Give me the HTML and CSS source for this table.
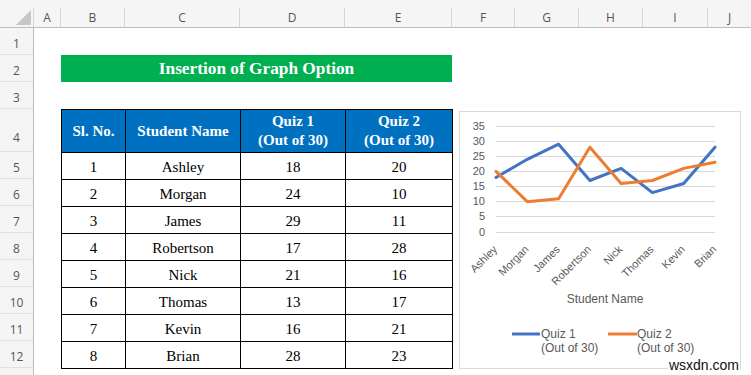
FILE: index.html
```html
<!DOCTYPE html>
<html>
<head>
<meta charset="utf-8">
<link rel="stylesheet" href="styles.css">
</head>
<body>
<div class="colbar">
  <div class="strip"></div>
  <div class="heads">
    <div class="corner"><svg width="34" height="19" viewBox="0 0 34 19"><polygon points="31,2 31,17 16,17" fill="#c7c7c7"/></svg></div>
    <div class="ch w27">A</div>
    <div class="ch w64">B</div>
    <div class="ch w115">C</div>
    <div class="ch w105">D</div>
    <div class="ch w107">E</div>
    <div class="ch w63">F</div>
    <div class="ch w64">G</div>
    <div class="ch w64">H</div>
    <div class="ch w65">I</div>
    <div class="ch w43 last">J</div>
  </div>
</div>
<div class="main">
  <div class="rowheads">
    <div class="rh">1</div>
    <div class="rh">2</div>
    <div class="rh">3</div>
    <div class="rh tall">4</div>
    <div class="rh">5</div>
    <div class="rh">6</div>
    <div class="rh">7</div>
    <div class="rh">8</div>
    <div class="rh">9</div>
    <div class="rh">10</div>
    <div class="rh">11</div>
    <div class="rh">12</div>
    <div class="rh stub"></div>
  </div>
  <div class="canvas">
    <div class="title">Insertion of Graph Option</div>
    <table class="data">
      <colgroup><col class="c1"><col class="c2"><col class="c3"><col class="c4"></colgroup>
      <thead>
        <tr><th>Sl. No.</th><th>Student Name</th><th>Quiz 1<br>(Out of 30)</th><th>Quiz 2<br>(Out of 30)</th></tr>
      </thead>
      <tbody>
        <tr><td>1</td><td>Ashley</td><td>18</td><td>20</td></tr>
        <tr><td>2</td><td>Morgan</td><td>24</td><td>10</td></tr>
        <tr><td>3</td><td>James</td><td>29</td><td>11</td></tr>
        <tr><td>4</td><td>Robertson</td><td>17</td><td>28</td></tr>
        <tr><td>5</td><td>Nick</td><td>21</td><td>16</td></tr>
        <tr><td>6</td><td>Thomas</td><td>13</td><td>17</td></tr>
        <tr><td>7</td><td>Kevin</td><td>16</td><td>21</td></tr>
        <tr><td>8</td><td>Brian</td><td>28</td><td>23</td></tr>
      </tbody>
    </table>
    <div class="chart">
      <svg class="plot" width="280" height="256" viewBox="1 1 280 256">
        <g stroke="#d9d9d9" stroke-width="1">
          <line x1="37" x2="256" y1="15.5" y2="15.5"/>
          <line x1="37" x2="256" y1="30.5" y2="30.5"/>
          <line x1="37" x2="256" y1="45.5" y2="45.5"/>
          <line x1="37" x2="256" y1="60.5" y2="60.5"/>
          <line x1="37" x2="256" y1="75.5" y2="75.5"/>
          <line x1="37" x2="256" y1="90.5" y2="90.5"/>
          <line x1="37" x2="256" y1="105.5" y2="105.5"/>
          <line x1="37" x2="256" y1="121.5" y2="121.5"/>
        </g>
        <g class="ylab" text-anchor="end">
          <text x="26" y="19">35</text>
          <text x="26" y="34">30</text>
          <text x="26" y="49">25</text>
          <text x="26" y="64">20</text>
          <text x="26" y="79">15</text>
          <text x="26" y="94">10</text>
          <text x="26" y="109">5</text>
          <text x="26" y="125">0</text>
        </g>
        <polyline fill="none" stroke="#4472c4" stroke-width="3" stroke-linejoin="round" stroke-linecap="round"
          points="37,66.5 68.3,48.3 99.6,33.2 130.9,69.5 162.1,57.4 193.4,81.6 224.7,72.5 256,36.2"/>
        <polyline fill="none" stroke="#ed7d31" stroke-width="3" stroke-linejoin="round" stroke-linecap="round"
          points="37,60.4 68.3,90.7 99.6,87.7 130.9,36.2 162.1,72.5 193.4,69.5 224.7,57.4 256,51.3"/>
        <g class="xlab" text-anchor="end">
          <text x="39" y="139" transform="rotate(-45 39 139)">Ashley</text>
          <text x="70.3" y="139" transform="rotate(-45 70.3 139)">Morgan</text>
          <text x="101.6" y="139" transform="rotate(-45 101.6 139)">James</text>
          <text x="132.9" y="139" transform="rotate(-45 132.9 139)">Robertson</text>
          <text x="164.1" y="139" transform="rotate(-45 164.1 139)">Nick</text>
          <text x="195.4" y="139" transform="rotate(-45 195.4 139)">Thomas</text>
          <text x="226.7" y="139" transform="rotate(-45 226.7 139)">Kevin</text>
          <text x="258" y="139" transform="rotate(-45 258 139)">Brian</text>
        </g>
        <text class="axtitle" x="146" y="192" text-anchor="middle">Student Name</text>
        <line x1="53" x2="81" y1="223" y2="223" stroke="#4472c4" stroke-width="3"/>
        <text class="leg" x="82" y="227">Quiz 1</text>
        <text class="leg" x="82" y="241">(Out of 30)</text>
        <line x1="149" x2="178" y1="223" y2="223" stroke="#ed7d31" stroke-width="3"/>
        <text class="leg" x="178" y="227">Quiz 2</text>
        <text class="leg" x="178" y="241">(Out of 30)</text>
      </svg>
    </div>
  </div>
</div>
<div class="mark">wsxdn.com</div>
</body>
</html>
```
FILE: styles.css
```css
html, body {
  margin: 0;
  padding: 0;
  background: #ffffff;
}
body {
  width: 751px;
  height: 375px;
  overflow: hidden;
  position: relative;
  font-family: "Open Sans", "Liberation Sans", sans-serif;
}
.colbar {
  background: #f5f5f5;
}
.strip {
  height: 8px;
}
.heads {
  display: flex;
  height: 19px;
  border-bottom: 1px solid #bdbdbd;
}
.corner {
  width: 34px;
  flex: none;
  border-right: 1px solid #d6d6d6;
  box-sizing: border-box;
}
.corner svg {
  display: block;
}
.ch {
  flex: none;
  box-sizing: border-box;
  border-right: 1px solid #d6d6d6;
  text-align: center;
  font-size: 12px;
  line-height: 19px;
  color: #555555;
}
.ch.last {
  border-right: none;
}
.w27 { width: 27px; }
.w43 { width: 43px; }
.w63 { width: 63px; }
.w64 { width: 64px; }
.w65 { width: 65px; }
.w105 { width: 105px; }
.w107 { width: 107px; }
.w115 { width: 115px; }
.main {
  display: flex;
}
.rowheads {
  width: 34px;
  flex: none;
  background: #f5f5f5;
  border-right: 1px solid #bdbdbd;
  box-sizing: border-box;
}
.rh {
  height: 27px;
  box-sizing: border-box;
  border-bottom: 1px solid #e1e1e1;
  display: flex;
  align-items: center;
  justify-content: center;
  padding-top: 4px;
  font-size: 12px;
  color: #555555;
}
.rh.tall {
  height: 43px;
  padding-top: 14px;
}
.rh.stub {
  height: 7px;
  border-bottom: none;
  padding: 0;
}
.canvas {
  display: grid;
  grid-template-columns: 27px 64px 115px 105px 107px 63px 64px 64px 65px 43px;
  grid-template-rows: 27px 27px 27px 43px repeat(8, 27px) 7px;
}
.title {
  grid-column: 2 / 6;
  grid-row: 2;
  background: #00b050;
  color: #ffffff;
  font-family: "Liberation Serif", "Times New Roman", serif;
  font-weight: bold;
  font-size: 17.3px;
  display: flex;
  align-items: center;
  justify-content: center;
  padding-top: 1px;
}
.data {
  grid-column: 2 / 6;
  grid-row: 4 / 13;
  align-self: start;
  border-collapse: collapse;
  table-layout: fixed;
  width: 391px;
  font-family: "Liberation Serif", "Times New Roman", serif;
  font-size: 15px;
  color: #000000;
}
.c1 { width: 64px; }
.c2 { width: 115px; }
.c3 { width: 105px; }
.c4 { width: 107px; }
.data th, .data td {
  border: 1px solid #000000;
  text-align: center;
  padding: 0;
}
.data th {
  background: #0070c0;
  color: #ffffff;
  font-weight: bold;
  height: 42px;
  line-height: 19px;
}
.data td {
  height: 25px;
  line-height: 16px;
  padding-top: 1px;
}
.chart {
  grid-column: 6 / 11;
  grid-row: 4 / 13;
  width: 282px;
  height: 258px;
  margin: 2px 0 0 7px;
  border: 1px solid #d9d9d9;
  box-sizing: border-box;
  background: #ffffff;
}
.plot {
  display: block;
}
.plot text {
  font-family: "Liberation Sans", Arial, sans-serif;
  fill: #595959;
}
.ylab text, .xlab text {
  font-size: 11px;
}
.axtitle {
  font-size: 12px;
}
.leg {
  font-size: 12px;
}
.mark {
  position: absolute;
  right: 11px;
  top: 357px;
  font-family: "Liberation Sans", Arial, sans-serif;
  font-size: 14px;
  line-height: 16px;
  color: #111111;
  background: #ffffff;
  padding: 0 1px;
}
```
